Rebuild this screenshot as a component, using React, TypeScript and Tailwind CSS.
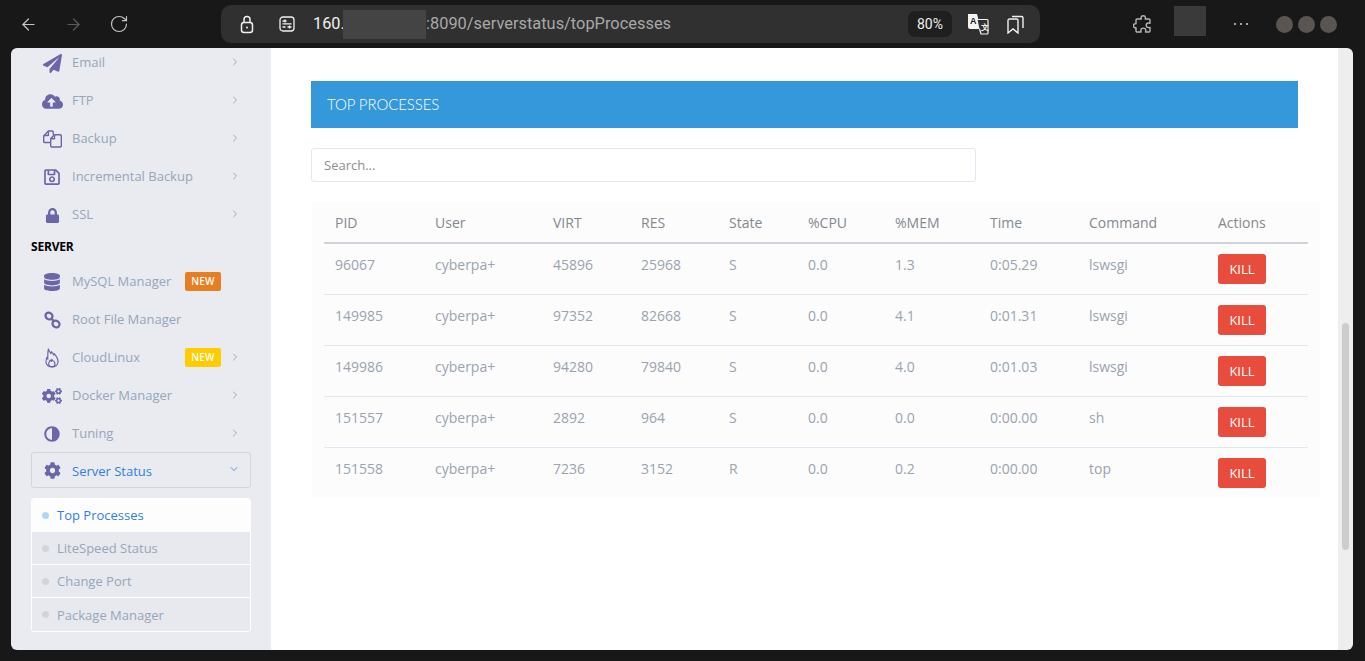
import React from "react";
import { ArrowLeft, ArrowRight, RotateCw, ChevronRight, ChevronDown } from "lucide-react";
import { FaPaperPlane, FaCloudUploadAlt, FaRegSave, FaLock, FaDatabase, FaCogs, FaAdjust, FaCog } from "react-icons/fa";

const Flame = () => (
  <svg width="14" height="20" viewBox="0 0 14 20" fill="none" stroke="#6c66a8" strokeWidth="1.2" strokeLinejoin="round">
    <path d="M3.500 1c.4 2.200 1.400 3.300 2.400 4.500.4-.6.600-1.200.5-1.900 1 .9 1.800 2.300 2.400 3.500.3-.5.400-1 .4-1.500 2 2.200 3.800 4.900 3.800 8 0 3.200-2.600 5.400-6 5.400s-6-2.100-6-5.100c0-1.900.4-3.400 1-4.600.2.800.4 1.300.8 1.700C2.700 7.500 2.700 3.800 3.500 1z" />
    <path d="M7 18.700c-1.900 0-3.300-1.200-3.300-2.900 0-1.500 1-2.500 1.500-3.800.4.900.9 1.200 1.400 1.400.3-.7.300-1.300.2-2 1.600 1.300 3.200 2.800 3.200 4.500 0 1.700-1.300 2.800-3 2.800z" />
  </svg>
);

const Copy = () => (
  <svg width="19" height="18" viewBox="0 0 19 18" fill="none" stroke="#6c66a8" strokeWidth="1.400" strokeLinejoin="round">
    <path d="M7.700 12.500H1.700a1 1 0 0 1-1-1V6L5.400 1h3.800a1 1 0 0 1 1 1v2.800" />
    <path d="M5.400 1v4.500H.7" />
    <path d="M11.500 4.700h5.800a1 1 0 0 1 1 1V16a1 1 0 0 1-1 1H8.700a1 1 0 0 1-1-1V8.600z" />
    <path d="M11.500 4.700v4.100H7.700" />
  </svg>
);

const Chain = () => (
  <svg width="17" height="18" viewBox="0 0 17 18" fill="none" stroke="#6c66a8" strokeWidth="2.300">
    <ellipse cx="5" cy="5" rx="3.600" ry="3.200" transform="rotate(35 5 5)" />
    <ellipse cx="12" cy="13" rx="3.600" ry="3.200" transform="rotate(35 12 13)" />
    <path d="M7.500 7.500l2.200 2.800" />
  </svg>
);

const iconCls = "text-[#6c66a8]";
type Item = { label: string; icon: React.ReactNode; chevron?: boolean; badge?: string };

const top: Item[] = [
  { label: "Email", icon: <FaPaperPlane size={19} className={iconCls} />, chevron: true },
  { label: "FTP", icon: <FaCloudUploadAlt size={21} className={iconCls} />, chevron: true },
  { label: "Backup", icon: <Copy />, chevron: true },
  { label: "Incremental Backup", icon: <FaRegSave size={18} className={iconCls} />, chevron: true },
  { label: "SSL", icon: <FaLock size={15} className={iconCls} />, chevron: true },
];
const server: Item[] = [
  { label: "MySQL Manager", icon: <FaDatabase size={18} className={iconCls} />, badge: "bg-[#e67e22]" },
  { label: "Root File Manager", icon: <Chain /> },
  { label: "CloudLinux", icon: <Flame />, chevron: true, badge: "bg-[#ffcc00]" },
  { label: "Docker Manager", icon: <FaCogs size={20} className={iconCls} />, chevron: true },
  { label: "Tuning", icon: <FaAdjust size={16} className={`${iconCls} -scale-x-100`} />, chevron: true },
];

const MenuRow = ({ item }: { item: Item }) => (
  <div className="h-[38px] flex items-center">
    <div className="w-[41px] pl-[1px] flex justify-center shrink-0">{item.icon}</div>
    <span className="text-[13px] text-[#97a6b9]">{item.label}</span>
    <div className="flex-1" />
    {item.badge && (
      <span className={`${item.badge} text-white text-[10px] font-semibold w-[36px] h-[19px] rounded-[2px] flex items-center justify-center tracking-[0.2px] absolute left-[154px] top-[9px]`}>NEW</span>
    )}
    {item.chevron && <ChevronRight size={12} strokeWidth={1.6} className="text-[#8d9aab] mr-[10px] -mt-[3px]" />}
  </div>
);

const SubRow = ({ label, active }: { label: string; active?: boolean }) => (
  <div className={`h-[33px] flex items-center border-b border-[#fdfdfe] last:border-b-0 pl-[10px] ${active ? "bg-[#fdfdfe]" : "bg-[#e8e9ee]"}`}>
    <span className={`w-[7px] h-[7px] rounded-full ${active ? "bg-[#b5d5f5]" : "bg-[#cfd4de]"}`} />
    <span className={`ml-[8px] pt-[2px] text-[13px] ${active ? "text-[#2f80e0]" : "text-[#97a6b9]"}`}>{label}</span>
  </div>
);

const columns = [
  ["PID", "w-[100px]"], ["User", "w-[118px]"], ["VIRT", "w-[88px]"], ["RES", "w-[88px]"], ["State", "w-[79px]"],
  ["%CPU", "w-[87px]"], ["%MEM", "w-[95px]"], ["Time", "w-[99px]"], ["Command", "w-[129px]"], ["Actions", "w-[101px]"],
];
const rows = [
  ["96067", "cyberpa+", "45896", "25968", "S", "0.0", "1.3", "0:05.29", "lswsgi"],
  ["149985", "cyberpa+", "97352", "82668", "S", "0.0", "4.1", "0:01.31", "lswsgi"],
  ["149986", "cyberpa+", "94280", "79840", "S", "0.0", "4.0", "0:01.03", "lswsgi"],
  ["151557", "cyberpa+", "2892", "964", "S", "0.0", "0.0", "0:00.00", "sh"],
  ["151558", "cyberpa+", "7236", "3152", "R", "0.0", "0.2", "0:00.00", "top"],
];

export default function App() {
  return (
    <div className="h-screen w-full bg-[#181818] flex flex-col overflow-hidden font-['Open_Sans',sans-serif]">
      {/* browser toolbar */}
      <div className="h-[48px] shrink-0 flex items-center relative">
        <div className="w-[221px] flex items-center pl-[19px] shrink-0">
          <ArrowLeft size={19} strokeWidth={1.5} className="text-[#c4c4c4]" />
          <ArrowRight size={19} strokeWidth={1.5} className="text-[#5a5a5a] ml-[26px]" />
          <RotateCw size={20} strokeWidth={1.4} className="text-[#c4c4c4] ml-[26px]" />
        </div>
        <div className="w-[819px] h-[38px] rounded-[10px] bg-[#303030] flex items-center relative shrink-0">
          <svg width="14" height="19" viewBox="0 0 14 19" fill="none" stroke="#f0f0f0" strokeWidth="1.5" className="ml-[19px] shrink-0">
            <rect x="1.500" y="7.500" width="11" height="10" rx="2.500" />
            <path d="M4 7.500V4.500a3 3 0 0 1 6 0v3" />
            <circle cx="7" cy="12.500" r="1" fill="#f0f0f0" stroke="none" />
          </svg>
          <svg width="16" height="16" viewBox="0 0 16 16" fill="none" stroke="#f0f0f0" strokeWidth="1.300" className="ml-[25px] shrink-0">
            <rect x="1" y="1" width="14" height="14" rx="3" />
            <path d="M3.500 5h4M6 3.500v3M3.500 7.800h9M8.500 11h4M10.500 9.500v3M3.500 11h3" />
          </svg>
          <span className="ml-[18px] w-[30px] text-[16.3px] text-[#f0f0f0] font-['Roboto',sans-serif]">160.</span>
          <span className="w-[83px] h-[29px] bg-[#444444] block shrink-0" />
          <span className="text-[16.4px] text-[#a8a8a8] font-['Roboto',sans-serif]">:8090/serverstatus/topProcesses</span>
          <div className="flex-1" />
          <span className="w-[44px] h-[26px] rounded-[7px] bg-[#1f1f1f] text-[#eeeeee] text-[14px] flex items-center justify-center font-['Roboto',sans-serif]">80%</span>
          <svg width="22" height="22" viewBox="0 0 22 22" className="ml-[15px] shrink-0">
            <path d="M1 1h9l4 15H3a2 2 0 0 1-2-2z" fill="#f4f4f4" />
            <text x="3" y="11" fontSize="9" fontWeight="700" fill="#222" fontFamily="Liberation Sans, sans-serif">A</text>
            <path d="M10.500 6.500H20a1 1 0 0 1 1 1V20a1 1 0 0 1-1 1h-6l-1.500-5" fill="#303030" stroke="#f4f4f4" strokeWidth="1.200" />
            <text x="14" y="17" fontSize="8" fontWeight="700" fill="#f4f4f4" fontFamily="Liberation Sans, sans-serif">文</text>
          </svg>
          <svg width="17" height="19" viewBox="0 0 17 19" fill="none" stroke="#f0f0f0" strokeWidth="1.400" className="ml-[18px] mr-[16px] shrink-0">
            <path d="M1 5.500a1.500 1.500 0 0 1 1.500-1.500h7A1.500 1.500 0 0 1 11 5.500V18l-5-4-5 4z" />
            <path d="M5 1.500h9.500A1.500 1.500 0 0 1 16 3v10" />
          </svg>
        </div>
        <svg width="20" height="20" viewBox="0 0 20 20" fill="none" stroke="#b5b5b5" strokeWidth="1.400" strokeLinejoin="round" className="ml-[93px] shrink-0">
          <path d="M8 3.500a2.300 2.300 0 0 1 4.500 0c0 .5-.2 1-.3 1.500H16a1 1 0 0 1 1 1v3.300c-.5-.2-1-.4-1.500-.3a2.300 2.300 0 0 0 0 4.600c.5 0 1-.1 1.500-.3V17a1 1 0 0 1-1 1h-3.500c.2-.5.3-1 .3-1.400a2.500 2.500 0 0 0-5 0c0 .4.100.9.300 1.400H4a1 1 0 0 1-1-1v-3.300c-1.500.3-2.500-.6-2.500-2 0-1.300 1-2.300 2.500-2V6a1 1 0 0 1 1-1h4.300C8.200 4.500 8 4 8 3.500z" />
        </svg>
        <div className="w-[32px] h-[30px] bg-[#3a3a3a] ml-[21px] -mt-[6px] shrink-0" />
        <div className="ml-[28px] flex gap-[4px] shrink-0">
          <span className="w-[2px] h-[2px] rounded-full bg-[#d0d0d0]" />
          <span className="w-[2px] h-[2px] rounded-full bg-[#d0d0d0]" />
          <span className="w-[2px] h-[2px] rounded-full bg-[#d0d0d0]" />
        </div>
        <div className="ml-[28px] flex gap-[5px] shrink-0">
          <span className="w-[17px] h-[17px] rounded-full bg-[#5a5551]" />
          <span className="w-[17px] h-[17px] rounded-full bg-[#5a5551]" />
          <span className="w-[17px] h-[17px] rounded-full bg-[#5a5551]" />
        </div>
      </div>

      {/* page */}
      <div className="ml-[11px] mr-[12px] h-[602px] flex rounded-[6px] overflow-hidden shrink-0">
        <aside className="w-[260px] shrink-0 bg-[#e9ebf1] overflow-hidden px-[20px]">
          <div className="-mt-[4px]">
            {top.map((i) => <div key={i.label} className="relative"><MenuRow item={i} /></div>)}
            <div className="h-[29px] pb-[3px] flex items-center text-[12px] font-bold text-black -tracking-[0.2px]">SERVER</div>
            {server.map((i) => <div key={i.label} className="relative"><MenuRow item={i} /></div>)}
            <div className="h-[36px] -mt-[1px] border border-[#d2d5dc] rounded-[3px] flex items-center">
              <div className="w-[40px] flex justify-center shrink-0"><FaCog size={17} className={iconCls} /></div>
              <span className="text-[13px] text-[#2f80e0] pt-[3px]">Server Status</span>
              <div className="flex-1" />
              <ChevronDown size={12} strokeWidth={1.6} className="text-[#2f80e0] mr-[10px] -mt-[3px]" />
            </div>
            <div className="mt-[10px] border border-[#fdfdfe] rounded-[3px] overflow-hidden">
              <SubRow label="Top Processes" active />
              <SubRow label="LiteSpeed Status" />
              <SubRow label="Change Port" />
              <SubRow label="Package Manager" />
            </div>
          </div>
        </aside>

        <main className="flex-1 bg-white pl-[40px] pr-[40px] pt-[33px] overflow-hidden">
          <div className="h-[47px] bg-[#3498db] flex items-center pl-[16px] text-[15px] font-light text-white font-['Lato',sans-serif] -tracking-[0.1px] w-[987px]">TOP PROCESSES</div>
          <div className="mt-[20px] w-[665px] h-[34px] border border-[#e2e8ef] rounded-[3px] flex items-center pl-[12px] pt-[2px] text-[13px] text-[#8d8d8d]">Search...</div>
          <div className="mt-[20px] ml-[1px] w-[1008px] h-[295px] bg-[#fcfcfc] rounded-[3px] px-[12px]">
            <table className="table-fixed w-[984px] border-collapse text-[14px]">
              <thead>
                <tr className="h-[41px] border-b-2 border-[#cfd3d9]">
                  {columns.map(([c, w]) => (
                    <th key={c} className={`${w} px-[11px] text-left font-normal text-[#85898f]`}>{c}</th>
                  ))}
                </tr>
              </thead>
              <tbody>
                {rows.map((r, i) => (
                  <tr key={r[0]} className={`h-[51px] ${i < 4 ? "border-b border-[#dfe7f0]" : ""}`}>
                    {r.map((v, j) => (
                      <td key={j} className="px-[11px] align-top pt-[10px] text-[#9aa3ae] whitespace-nowrap">{v}</td>
                    ))}
                    <td className="px-[11px] align-top pt-[10px]">
                      <div className="w-[48px] h-[30px] rounded-[3px] bg-[#e74c3c] text-white text-[13px] pt-[2px] flex items-center justify-center">KILL</div>
                    </td>
                  </tr>
                ))}
              </tbody>
            </table>
          </div>
        </main>

        <div className="w-[15px] shrink-0 bg-[#eeeeee] pt-[275px] flex justify-center">
          <div className="w-[7px] h-[227px] rounded-full bg-[#cdcdcd]" />
        </div>
      </div>
    </div>
  );
}
